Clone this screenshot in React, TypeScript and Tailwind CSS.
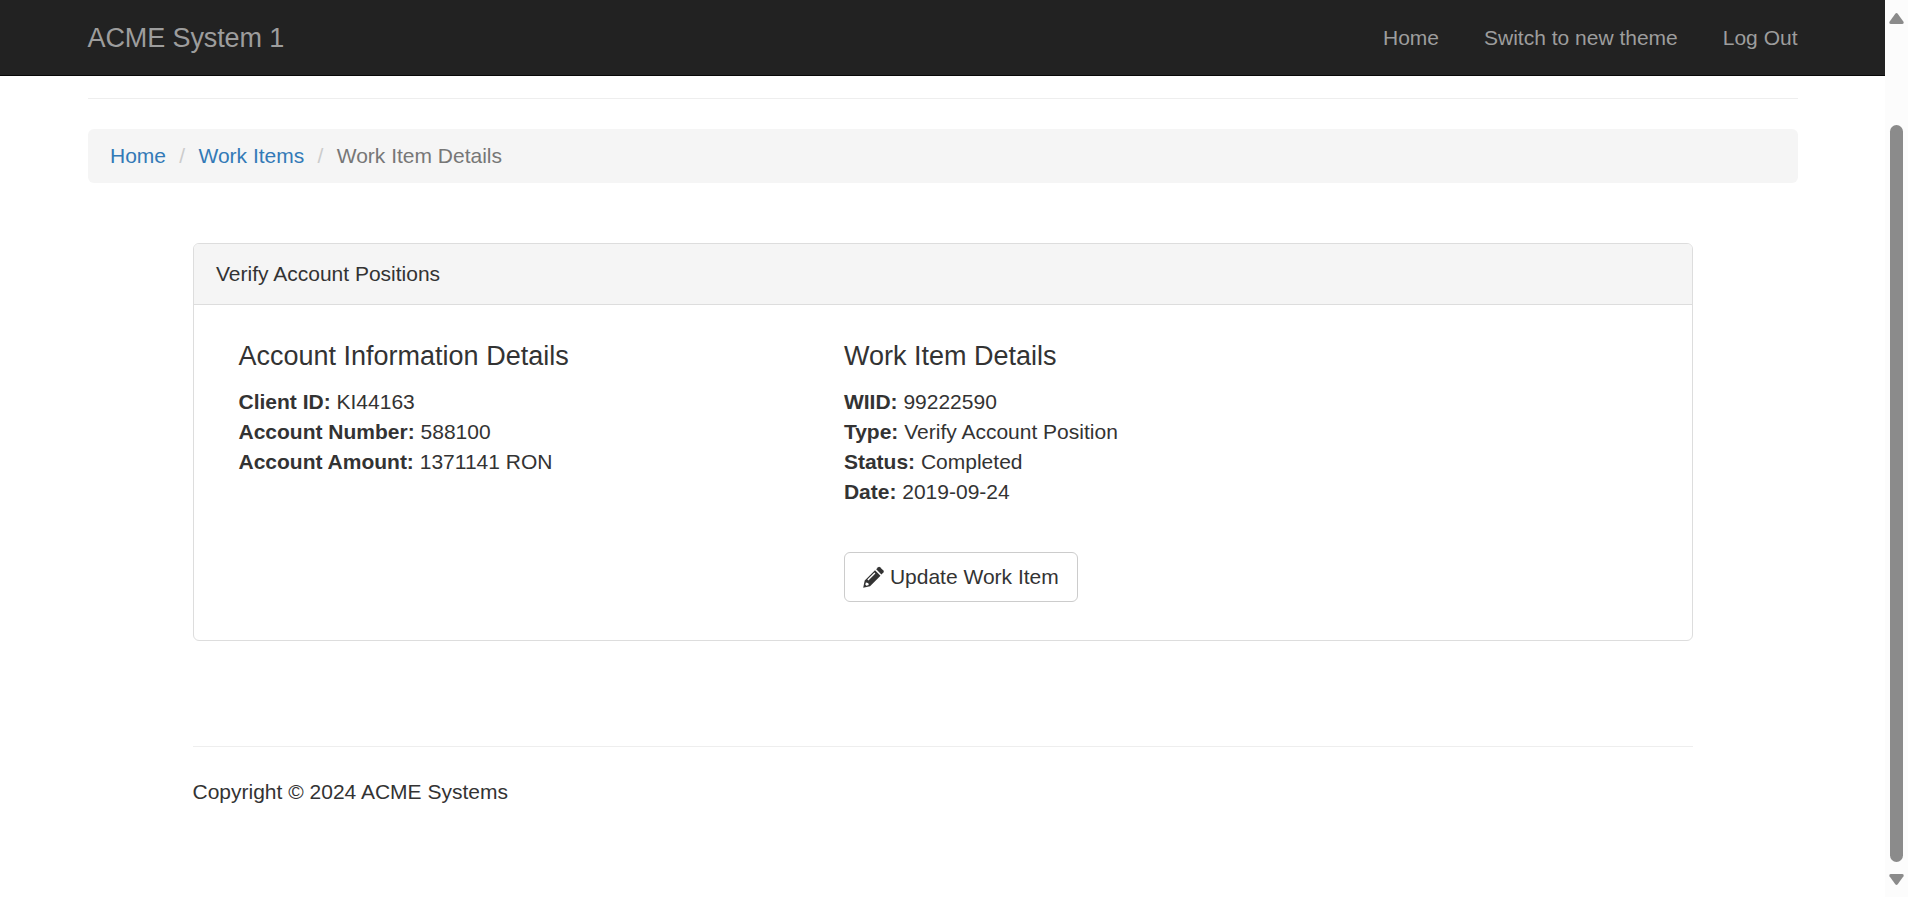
import React from "react";

const Pencil = () => (
  <svg className="mr-[6px] h-[21px] w-[21px] shrink-0 overflow-visible" viewBox="0 0 21 21" fill="currentColor" aria-hidden="true">
    <path d="M13.2 2.2 15.2.2Q16.1-.6 17 .2L20.4 3.6Q21.3 4.5 20.4 5.4L18.4 7.4Z" />
    <path
      fillRule="evenodd"
      d="M12 3.2 17.5 8.7 7 19.2.2 20.8 1.7 13.5ZM11.4 5.6 4.4 12.6 5.4 13.4 12.4 6.4ZM3 15.2 2.3 17.6 3.4 18.7 5.8 18 5.2 16 3.6 15.8Z"
    />
  </svg>
);

const Arrow = ({ down = false }: { down?: boolean }) => (
  <svg className={down ? "h-[11px] w-[15px] rotate-180" : "h-[11px] w-[15px]"} viewBox="0 0 15 11" fill="#8b8b8b" aria-hidden="true">
    <path d="M6.3 .8Q7.5-.6 8.7 .8L14.5 8.8Q15.2 11 13 11H2Q-.2 11 .5 8.8Z" />
  </svg>
);

const Field = ({ label, value }: { label: string; value: string }) => (
  <div>
    <b>{label}</b> {value}
  </div>
);

export default function App() {
  return (
    <div className="flex h-[897px] w-full overflow-hidden bg-white font-['Liberation_Sans',Arial,sans-serif] text-[21px] leading-[30px] text-[#333]">
      <div className="flex min-w-0 flex-1 flex-col">
        <nav className="flex h-[76px] shrink-0 items-center justify-between border-b border-[#080808] bg-[#222] px-[87.5px] text-[#9d9d9d]">
          <a className="text-[27px] tracking-[-0.1px]">ACME System 1</a>
          <div className="flex gap-[45px]">
            <a>Home</a>
            <a>Switch to new theme</a>
            <a>Log Out</a>
          </div>
        </nav>
        <main className="px-[87.5px] pt-[22px]">
          <hr className="border-[#eee]" />
          <ol className="mt-[30px] flex h-[54px] items-center rounded-md bg-[#f5f5f5] px-[22.5px]">
            <li className="text-[#337ab7]">Home</li>
            <li className="px-[13.3px] text-[#ccc]">/</li>
            <li className="text-[#337ab7]">Work Items</li>
            <li className="px-[13.3px] text-[#ccc]">/</li>
            <li className="text-[#777]">Work Item Details</li>
          </ol>
          <div className="px-[105px] pt-[60px]">
            <section className="h-[398px] rounded-md border border-[#ddd]">
              <header className="h-[61px] rounded-t-[5px] border-b border-[#ddd] bg-[#f5f5f5] px-[22.5px] py-[15px]">
                Verify Account Positions
              </header>
              <div className="flex px-[22.5px] pt-[36.5px]">
                <div className="w-5/12 px-[22.5px]">
                  <h4 className="mb-4 text-[27px] leading-[29.7px]">Account Information Details</h4>
                  <Field label="Client ID:" value="KI44163" />
                  <Field label="Account Number:" value="588100" />
                  <Field label="Account Amount:" value="1371141 RON" />
                </div>
                <div className="w-7/12 px-[22.5px]">
                  <h4 className="mb-4 text-[27px] leading-[29.7px]">Work Item Details</h4>
                  <Field label="WIID:" value="99222590" />
                  <Field label="Type:" value="Verify Account Position" />
                  <Field label="Status:" value="Completed" />
                  <Field label="Date:" value="2019-09-24" />
                  <button className="mt-[45px] flex h-[50px] items-center rounded-md border border-[#ccc] px-[18px]">
                    <Pencil />
                    Update Work Item
                  </button>
                </div>
              </div>
            </section>
            <hr className="mt-[105px] border-[#eee]" />
            <footer className="mt-[30px]">Copyright © 2024 ACME Systems</footer>
          </div>
        </main>
      </div>
      <div className="flex w-[23px] shrink-0 flex-col items-center bg-[#fcfcfc] pt-[13px]">
        <Arrow />
        <div className="mt-[101px] h-[737px] w-[13px] rounded-full bg-[#8b8b8b]" />
        <div className="mt-[12px]">
          <Arrow down />
        </div>
      </div>
    </div>
  );
}
